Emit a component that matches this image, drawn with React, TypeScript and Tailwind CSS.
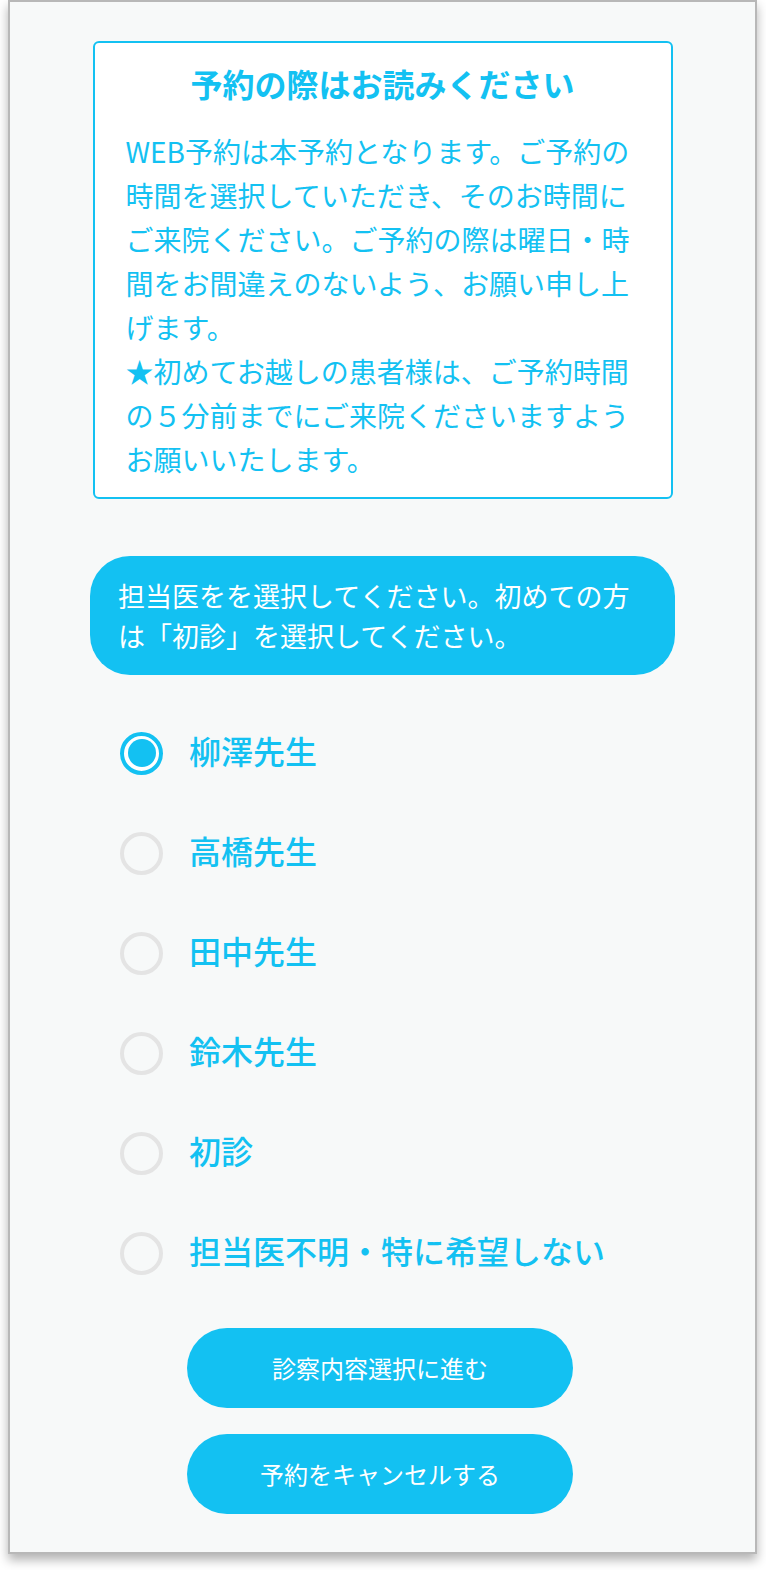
import { useState } from 'react';

const doctors = ['柳澤先生', '高橋先生', '田中先生', '鈴木先生', '初診', '担当医不明・特に希望しない'];

function Radio({ label, checked, onSelect }: { label: string; checked: boolean; onSelect: () => void }) {
  return (
    <button type="button" onClick={onSelect} className="flex h-[100px] items-center gap-[26px] text-left">
      {checked ? (
        <span className="flex h-[43px] w-[43px] items-center justify-center rounded-full border-[4px] border-[#13c1f2] bg-white">
          <span className="h-[28px] w-[28px] rounded-full bg-[#13c1f2]"></span>
        </span>
      ) : (
        <span className="h-[43px] w-[43px] rounded-full border-[4px] border-[#e4e4e4]"></span>
      )}
      <span className="pb-[6px] text-[32px] font-medium leading-[44px] text-[#13c1f2]">{label}</span>
    </button>
  );
}

export default function App() {
  const [selected, setSelected] = useState(0);

  return (
    <div className="min-h-[1570px] bg-white font-['Noto_Sans_CJK_JP','Noto_Sans',sans-serif]">
      <div className="ml-[8px] w-[749px] border-2 border-[#b8b8b8] bg-[#f7f9f9] pb-[38px] shadow-[0_6px_10px_rgba(0,0,0,0.3)]">
        <div className="mx-auto mt-[39px] w-[580px] rounded-[6px] border-2 border-[#13c1f2] bg-white px-[31px] pb-[16px] pt-[18px]">
          <h2 className="text-center text-[32px] font-bold leading-[44px] text-[#13c1f2]">予約の際はお読みください</h2>
          <p className="mt-[24px] text-[28px] leading-[44px] text-[#13c1f2]">
            WEB予約は本予約となります。ご予約の時間を選択していただき、そのお時間にご来院ください。ご予約の際は曜日・時間をお間違えのないよう、お願い申し上げます。
            <br />
            ★初めてお越しの患者様は、ご予約時間の５分前までにご来院くださいますようお願いいたします。
          </p>
        </div>

        <div className="mx-auto mt-[57px] w-[585px] rounded-[40px] bg-[#13c1f2] pb-[19px] pl-[28px] pr-[20px] pt-[20px]">
          <p className="text-[27px] leading-[40px] text-white">担当医をを選択してください。初めての方は「初診」を選択してください。</p>
        </div>

        <div className="mt-[28px] flex flex-col pl-[110px]">
          {doctors.map((d, i) => (
            <Radio key={d} label={d} checked={selected === i} onSelect={() => setSelected(i)} />
          ))}
        </div>

        <div className="ml-[177px] mt-[25px] flex w-[386px] flex-col gap-[26px]">
          <button type="button" className="h-[80px] rounded-full bg-[#13c1f2] text-[24px] text-white">
            診察内容選択に進む
          </button>
          <button type="button" className="h-[80px] rounded-full bg-[#13c1f2] text-[24px] text-white">
            予約をキャンセルする
          </button>
        </div>
      </div>
    </div>
  );
}
